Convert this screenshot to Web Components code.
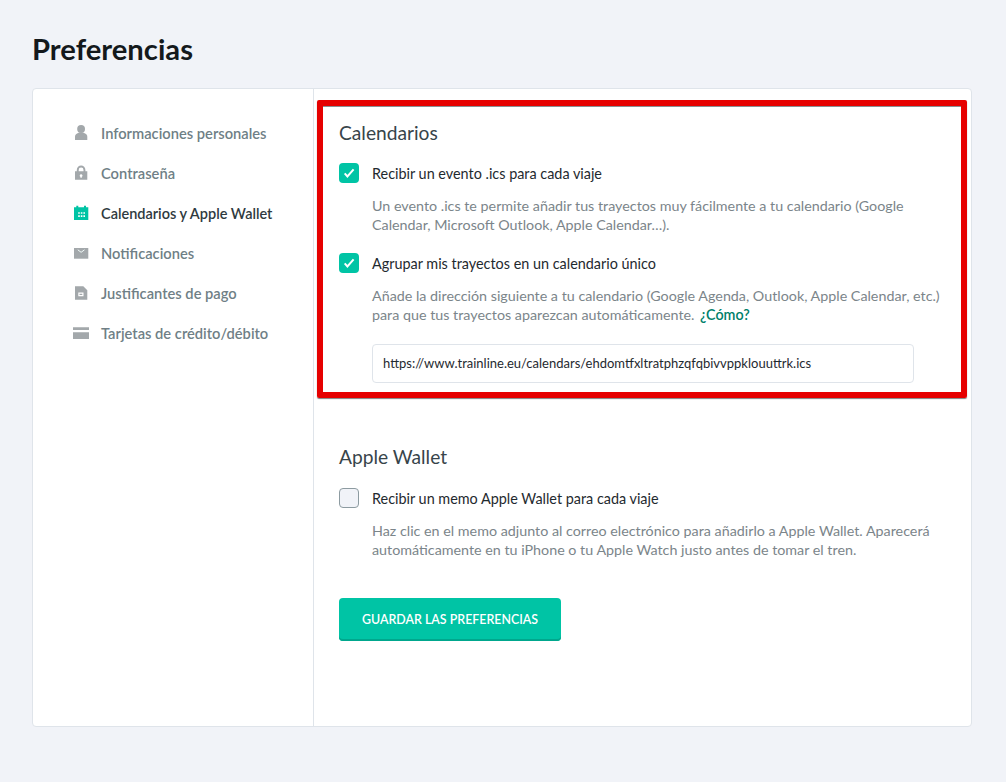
<!DOCTYPE html>
<html lang="es">
<head>
<meta charset="utf-8">
<title>Preferencias</title>
<style>
  html, body { margin: 0; padding: 0; }
  body { background: #f1f3f8; font-family: Lato, "Liberation Sans", sans-serif; color: #1f2a2f; }
</style>
</head>
<body>
<prefs-page>
  <prefs-nav slot="nav">
    <nav-item icon="user">Informaciones personales</nav-item>
    <nav-item icon="lock">Contraseña</nav-item>
    <nav-item icon="calendar" active>Calendarios y Apple Wallet</nav-item>
    <nav-item icon="mail">Notificaciones</nav-item>
    <nav-item icon="doc">Justificantes de pago</nav-item>
    <nav-item icon="card">Tarjetas de crédito/débito</nav-item>
  </prefs-nav>

  <prefs-section heading="Calendarios" highlight>
    <check-option checked label="Recibir un evento .ics para cada viaje">
      Un evento .ics te permite añadir tus trayectos muy fácilmente a tu calendario (Google<br>Calendar, Microsoft Outlook, Apple Calendar…).
    </check-option>
    <check-option checked label="Agrupar mis trayectos en un calendario único">
      Añade la dirección siguiente a tu calendario (Google Agenda, Outlook, Apple Calendar, etc.)<br>para que tus trayectos aparezcan automáticamente. <a href="#" style="color:#00806b;text-decoration:none;font-weight:600;margin-left:2px">¿Cómo?</a>
      <url-field slot="extra" value="https://www.trainline.eu/calendars/ehdomtfxltratphzqfqbivvppklouuttrk.ics"></url-field>
    </check-option>
  </prefs-section>

  <prefs-section heading="Apple Wallet" spaced>
    <check-option label="Recibir un memo Apple Wallet para cada viaje">
      Haz clic en el memo adjunto al correo electrónico para añadirlo a Apple Wallet. Aparecerá<br>automáticamente en tu iPhone o tu Apple Watch justo antes de tomar el tren.
    </check-option>
  </prefs-section>

  <save-button>Guardar las preferencias</save-button>
</prefs-page>

<script>
const ICONS = {
  user: '<circle cx="8.100" cy="4" r="3.900"/><path d="M2 15v-3.200C2 9.300 4.500 7.600 8.100 7.600s6.200 1.700 6.200 4.200V15z"/>',
  lock: '<path fill-rule="evenodd" d="M2 6.300h1.800V4.900a4.300 4.300 0 0 1 8.600 0v1.400h1.900v8.400H2zM5.700 6.300h4.800V4.900a2.400 2.400 0 0 0-4.800 0zM8.100 9.200a1.400 1.400 0 0 0-.7 2.600v1h1.400v-1a1.400 1.400 0 0 0-.7-2.600z"/>',
  calendar: '<path fill-rule="evenodd" d="M1 2.200h2.300V.7h2v1.500h5.700V.7h2v1.500h2.300V15H1zM5.200 7.200v1.600h1.600V7.200zm2.600 0v1.600h1.600V7.200zm2.600 0v1.600H12V7.200zM5.200 10.300v1.600h1.600v-1.600zm2.600 0v1.600h1.600v-1.600zm2.600 0v1.600H12v-1.600z"/>',
  mail: '<path d="M1 3h14.300v10.700H1z"/><path d="M4.800 4.800 8.100 7.300l3.400-2.500" fill="none" stroke="#f2fbf9" stroke-width="1"/>',
  doc: '<path fill-rule="evenodd" d="M2 1.300h8.300l4 4v9.400H2zM5.300 7.500v3.700h5.200V7.500zM6.500 8.700h2.800v1.300H6.500z"/>',
  card: '<path d="M0 2.300h16V5H0zM0 7.300h16V14H0z"/>'
};

customElements.define('prefs-page', class extends HTMLElement {
  constructor() {
    super();
    this.attachShadow({ mode: 'open' }).innerHTML = `
      <style>
        :host { display: block; padding: 31px 34px 55px 32px; }
        h1 { margin: 0 0 21px; font-size: 29.200px; line-height: 36px; font-weight: 700; color: #14191c; }
        .card {
          display: flex; height: 637px; background: #fff;
          border: 1px solid #dfe4ea; border-radius: 4px;
        }
        .side { flex: 0 0 280px; border-right: 1px solid #dfe4ea; padding-top: 24px; }
        .main { flex: 1; min-width: 0; padding: 11px 4px 0 3px; }
        ::slotted(save-button) { margin: 15px 0 0 22px; }
      </style>
      <h1>Preferencias</h1>
      <div class="card">
        <div class="side"><slot name="nav"></slot></div>
        <div class="main"><slot></slot></div>
      </div>`;
  }
});

customElements.define('prefs-nav', class extends HTMLElement {
  constructor() {
    super();
    this.attachShadow({ mode: 'open' }).innerHTML = `
      <style>:host { display: flex; flex-direction: column; }</style>
      <slot></slot>`;
  }
});

customElements.define('nav-item', class extends HTMLElement {
  constructor() {
    super();
    const active = this.hasAttribute('active');
    this.attachShadow({ mode: 'open' }).innerHTML = `
      <style>
        :host { display: flex; align-items: center; height: 40px; padding-left: 40px; font-size: ${active ? '14.500px' : '14.700px'}; font-weight: 600; color: ${active ? '#2f3a40' : '#6f7f86'}; }
        svg { width: 16px; height: 16px; flex: none; fill: ${active ? '#00c4a5' : '#a3a8ab'}; margin-right: 12px; }
      </style>
      <svg viewBox="0 0 16 16">${ICONS[this.getAttribute('icon')]}</svg>
      <span><slot></slot></span>`;
  }
});

customElements.define('prefs-section', class extends HTMLElement {
  constructor() {
    super();
    const hl = this.hasAttribute('highlight');
    const h2Gap = this.hasAttribute('spaced') ? 18 : 17;
    this.attachShadow({ mode: 'open' }).innerHTML = `
      <style>
        :host {
          display: block; box-sizing: border-box;
          ${hl ? 'border: 6px solid #e60000; box-shadow: 0 1px 1px rgba(0,0,0,.5), inset 0 1px 0 #8a9094; border-radius: 2px; height: 298px; margin-bottom: 47px; padding: 15px 16px 0;'
               : 'border: 6px solid transparent; border-top: 0; padding: 0 16px;'}
        }
        h2 { margin: 0 0 ${h2Gap}px; font-size: 19.200px; line-height: 24px; font-weight: 400; color: #37444a; }
      </style>
      <h2>${this.getAttribute('heading')}</h2>
      <slot></slot>`;
  }
});

customElements.define('check-option', class extends HTMLElement {
  constructor() {
    super();
    const on = this.hasAttribute('checked');
    this.attachShadow({ mode: 'open' }).innerHTML = `
      <style>
        :host { display: block; margin-bottom: 18px; }
        .row { display: flex; align-items: center; height: 22px; gap: 13px; font-size: 14.400px; color: #1f2a2f; }
        .box {
          box-sizing: border-box; width: 20px; height: 20px; border-radius: 4px; flex: none;
          background: ${on ? '#00c4a5' : '#f1f3f8'};
          border: ${on ? '0' : '1px solid #8d9ba1'};
        }
        svg { display: block; width: 20px; height: 20px; fill: none; stroke: #fff; stroke-width: 2; }
        .help { margin: 12px 0 0 33px; font-size: 14.300px; line-height: 19px; color: #7b858a; }
        ::slotted(url-field) { margin: 20px 0 0 33px; }
      </style>
      <label class="row">
        <span class="box">${on ? '<svg viewBox="0 0 20 20"><path d="M5.700 10.300 8.400 13.400 14.600 6.300"/></svg>' : ''}</span>
        <span>${this.getAttribute('label')}</span>
      </label>
      <div class="help"><slot></slot></div>
      <slot name="extra"></slot>`;
  }
});

customElements.define('url-field', class extends HTMLElement {
  constructor() {
    super();
    this.attachShadow({ mode: 'open' }).innerHTML = `
      <style>
        :host {
          display: flex; align-items: center; box-sizing: border-box; width: 542px; height: 39px;
          padding: 0 10px 2px; background: #fff; border: 1px solid #dfe4ea; border-radius: 4px;
          font-size: 13px; color: #1f2a2f;
        }
      </style>
      <span>${this.getAttribute('value')}</span>`;
  }
});

customElements.define('save-button', class extends HTMLElement {
  constructor() {
    super();
    this.attachShadow({ mode: 'open' }).innerHTML = `
      <style>
        :host { display: block; width: 222px; }
        button {
          display: block; width: 222px; height: 43px; padding: 0; border: 0; border-radius: 4px;
          background: #00c4a5; box-shadow: inset 0 -2px 0 #00a78d;
          color: #fff; font: 600 12.400px Lato, "Liberation Sans", sans-serif; text-transform: uppercase;
        }
      </style>
      <button><slot></slot></button>`;
  }
});
</script>
</body>
</html>
